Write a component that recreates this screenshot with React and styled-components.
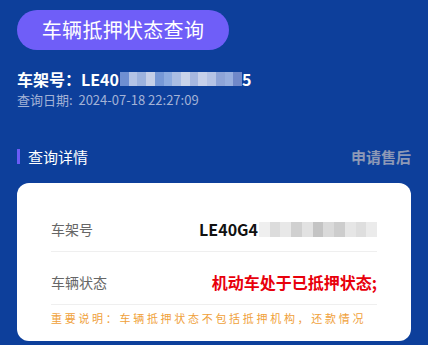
import React from 'react';
import styled, { createGlobalStyle } from 'styled-components';

const GlobalStyle = createGlobalStyle`
  html, body {
    margin: 0;
    padding: 0;
    background: #0d3f9b;
    font-family: "Noto Sans CJK SC", "Noto Sans", sans-serif;
  }
`;

const headerMosaic = ['#6f8fd2', '#b3c3e6', '#9cb2de', '#c5cfe8', '#7698d6', '#8cabe0', '#a9bde4', '#c8d3ea', '#a6b7e0', '#c6d0ea', '#b5c3e5', '#8ea4d7', '#97aede', '#7088c9'];
const cardMosaic = ['#efefef', '#dcdcdc', '#e8e8e8', '#d0d0d0', '#e2e2e2', '#c4c4c4', '#dadada', '#cdcdcd', '#e6e6e6', '#dedede', '#ebebeb'];

const stops = (colors) =>
  colors
    .map((c, i) => {
      const a = ((i / colors.length) * 100).toFixed(2);
      const b = (((i + 1) / colors.length) * 100).toFixed(2);
      return `${c} ${a}%, ${c} ${b}%`;
    })
    .join(', ');

const App = () => {
  return (
    <>
      <GlobalStyle />
      <Page>
        <TitlePill>车辆抵押状态查询</TitlePill>
        <VinLine>
          车架号：LE40
          <Mosaic $colors={headerMosaic} $width={122} $height={14} />
          5
        </VinLine>
        <DateLine>查询日期:&nbsp; 2024-07-18 22:27:09</DateLine>

        <SectionHead>
          <SectionTitle>查询详情</SectionTitle>
          <AfterSale>申请售后</AfterSale>
        </SectionHead>

        <Card>
          <Row>
            <Label>车架号</Label>
            <Value>
              LE40G4
              <Mosaic $colors={cardMosaic} $width={118} $height={15} />
            </Value>
          </Row>
          <Row>
            <Label>车辆状态</Label>
            <Value $danger>机动车处于已抵押状态;</Value>
          </Row>
          <Note>重要说明：车辆抵押状态不包括抵押机构，还款情况</Note>
        </Card>
      </Page>
    </>
  );
};

export default App;

const Page = styled.div`
  width: 428px;
  height: 345px;
  overflow: hidden;
  padding: 10px 17px 0;
  box-sizing: border-box;
`;

const TitlePill = styled.div`
  width: 212px;
  height: 40px;
  border-radius: 20px;
  background: #6f5ef8;
  color: #ffffff;
  font-size: 20px;
  line-height: 40px;
  text-align: center;
  letter-spacing: 0.3px;
`;

const VinLine = styled.div`
  display: flex;
  align-items: center;
  margin-top: 17px;
  height: 24px;
  color: #ffffff;
  font-size: 16px;
  font-weight: 700;
  white-space: nowrap;
`;

const Mosaic = styled.span`
  display: inline-block;
  width: ${({ $width }) => $width}px;
  height: ${({ $height }) => $height}px;
  margin-left: 1px;
  background: linear-gradient(to right, ${({ $colors }) => stops($colors)});
  filter: blur(0.6px);
`;

const DateLine = styled.div`
  margin-top: 0;
  height: 18px;
  line-height: 18px;
  color: #a3b2d6;
  font-size: 13px;
`;

const SectionHead = styled.div`
  display: flex;
  justify-content: space-between;
  align-items: center;
  margin-top: 36px;
  height: 22px;
`;

const SectionTitle = styled.div`
  display: flex;
  align-items: center;
  gap: 8px;
  color: #ffffff;
  font-size: 15px;

  &::before {
    content: '';
    width: 3px;
    height: 15px;
    background: #6b5cf6;
  }
`;

const AfterSale = styled.div`
  color: #8d99b6;
  font-size: 15px;
  font-weight: 700;
`;

const Card = styled.div`
  margin-top: 16px;
  height: 158px;
  box-sizing: border-box;
  background: #ffffff;
  border-radius: 12px;
  padding: 16px 34px 0;
`;

const Row = styled.div`
  display: flex;
  justify-content: space-between;
  align-items: center;
  padding: 20px 0 12px;
  line-height: 20px;
  border-bottom: 1px solid #efefef;
`;

const Label = styled.span`
  color: #666666;
  font-size: 14px;
`;

const Value = styled.span`
  display: flex;
  align-items: center;
  font-size: 16px;
  font-weight: 700;
  color: ${({ $danger }) => ($danger ? '#e8000b' : '#111111')};
  white-space: nowrap;
`;

const Note = styled.div`
  margin-top: 5px;
  line-height: 16px;
  color: #f0a13a;
  font-size: 11px;
  letter-spacing: 2.7px;
  white-space: nowrap;
`;
